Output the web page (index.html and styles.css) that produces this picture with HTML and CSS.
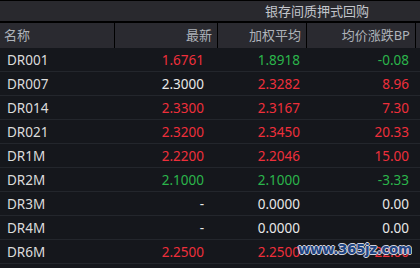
FILE: index.html
```html
<!DOCTYPE html>
<html>
<head>
<meta charset="utf-8">
<link rel="stylesheet" href="styles.css">
</head>
<body>
<div class="panel">
  <div class="title">
    <div class="title-text">银存间质押式回购</div>
  </div>
  <div class="grid head">
    <div class="hc left">名称</div>
    <div class="hc">最新</div>
    <div class="hc">加权平均</div>
    <div class="hc">均价涨跌BP</div>
    <div class="hc end"></div>
  </div>
  <div class="rows">
    <div class="grid row"><div class="name">DR001</div><div class="v c1 up">1.6761</div><div class="v c2 down">1.8918</div><div class="v c3 down">-0.08</div></div>
    <div class="grid row"><div class="name">DR007</div><div class="v c1">2.3000</div><div class="v c2 up">2.3282</div><div class="v c3 up">8.96</div></div>
    <div class="grid row"><div class="name">DR014</div><div class="v c1 up">2.3300</div><div class="v c2 up">2.3167</div><div class="v c3 up">7.30</div></div>
    <div class="grid row"><div class="name">DR021</div><div class="v c1 up">2.3200</div><div class="v c2 up">2.3450</div><div class="v c3 up">20.33</div></div>
    <div class="grid row"><div class="name">DR1M</div><div class="v c1 up">2.2200</div><div class="v c2 up">2.2046</div><div class="v c3 up">15.00</div></div>
    <div class="grid row"><div class="name">DR2M</div><div class="v c1 down">2.1000</div><div class="v c2 down">2.1000</div><div class="v c3 down">-3.33</div></div>
    <div class="grid row"><div class="name">DR3M</div><div class="v c1">-</div><div class="v c2">0.0000</div><div class="v c3">0.00</div></div>
    <div class="grid row"><div class="name">DR4M</div><div class="v c1">-</div><div class="v c2">0.0000</div><div class="v c3">0.00</div></div>
    <div class="grid row"><div class="name">DR6M</div><div class="v c1 up">2.2500</div><div class="v c2 up">2.2500</div><div class="v c3 up">22.00</div></div>
  </div>
  <div class="watermark">www.365jz.com</div>
</div>
</body>
</html>
```
FILE: styles.css
```css
html, body {
  margin: 0;
  padding: 0;
  background: #15171c;
}
body {
  width: 420px;
  height: 268px;
  overflow: hidden;
  font-family: "Noto Sans", "Noto Sans CJK SC", sans-serif;
  font-size: 13px;
}
.panel {
  position: relative;
  border-top: 1px solid #000;
}
.grid {
  display: grid;
  grid-template-columns: 115px 103px 89px 109px 4px;
}
.title {
  height: 20px;
  background: #29292e;
  border-bottom: 2px solid #000;
  display: grid;
  grid-template-columns: 218px 198px 4px;
}
.title-text {
  grid-column: 2;
  text-align: center;
  color: #c3c6cc;
  font-size: 13px;
  line-height: 20px;
}
.head {
  height: 25px;
  background: #2a2a30;
}
.hc {
  border-right: 1px solid #000;
  color: #aeb3ba;
  text-align: right;
  padding-right: 5px;
  line-height: 25px;
}
.hc.left {
  text-align: left;
  padding-left: 4px;
  padding-right: 0;
}
.hc.end {
  border-right: 0;
  padding: 0;
}
.row {
  height: 23px;
  border-bottom: 1px solid #23262c;
  line-height: 24px;
}
.name {
  color: #dcdcdc;
  padding-left: 7px;
  font-size: 13.5px;
}
.v {
  text-align: right;
  color: #e8e8e8;
  font-size: 13.5px;
}
.c1 { padding-right: 14px; }
.c2 { padding-right: 7px; }
.c3 { padding-right: 7px; }
.up { color: #ee2f3b; }
.down { color: #2bb54b; }
.watermark {
  position: absolute;
  left: 298px;
  top: 240px;
  font-family: "DejaVu Sans", sans-serif;
  font-weight: bold;
  font-size: 13.5px;
  letter-spacing: -0.4px;
  color: #1f4a8f;
  text-shadow: 1px 0 0 #e8e8f0, -1px 0 0 #e8e8f0, 0 1px 0 #e8e8f0, 0 -1px 0 #e8e8f0;
  opacity: 0.9;
}
```
